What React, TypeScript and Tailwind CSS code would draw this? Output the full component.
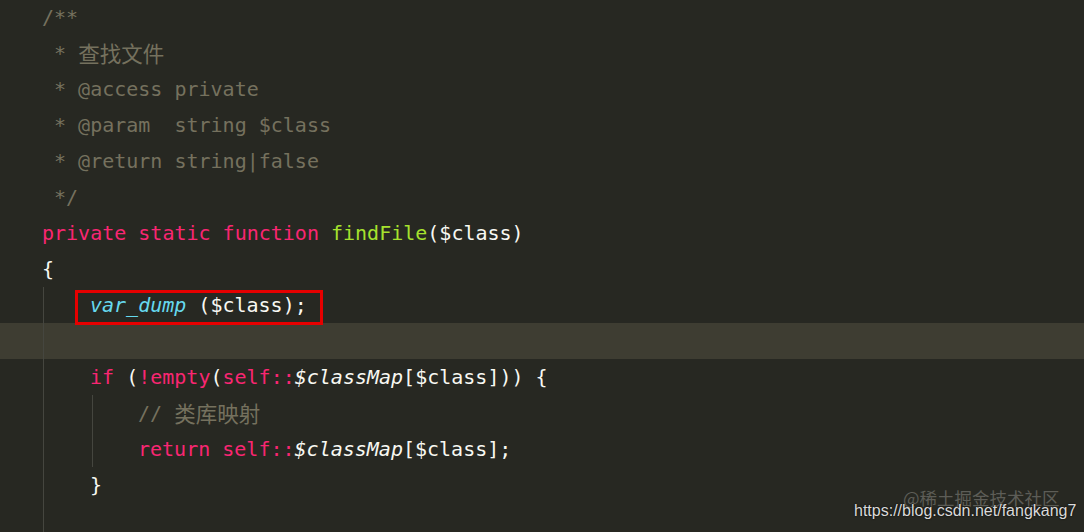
const mono = "font-['DejaVu_Sans_Mono','Liberation_Mono','Noto_Sans_CJK_SC',monospace]";

type Tok = { t: string; c?: string };

const cm = "text-[#75715e]";
const kw = "text-[#f92672]";
const fn = "text-[#a6e22e]";
const pl = "text-[#f8f8f2]";
const bi = "text-[#66d9ef] italic";
const it = "text-[#f8f8f2] italic";

// guides: how many indent guides precede the line text
type Line = { guides: number; toks: Tok[]; active?: boolean };

const lines: Line[] = [
  { guides: 0, toks: [{ t: "/**", c: cm }] },
  { guides: 0, toks: [{ t: " * ", c: cm }, { t: "查找文件", c: "cjk" }] },
  { guides: 0, toks: [{ t: " * @access private", c: cm }] },
  { guides: 0, toks: [{ t: " * @param  string $class", c: cm }] },
  { guides: 0, toks: [{ t: " * @return string|false", c: cm }] },
  { guides: 0, toks: [{ t: " */", c: cm }] },
  {
    guides: 0,
    toks: [
      { t: "private static function ", c: kw },
      { t: "findFile", c: fn },
      { t: "($class)", c: pl },
    ],
  },
  { guides: 0, toks: [{ t: "{", c: pl }] },
  { guides: 1, toks: [{ t: "var_dump", c: bi }, { t: " ($class);", c: pl }] },
  { guides: 1, toks: [], active: true },
  {
    guides: 1,
    toks: [
      { t: "if", c: kw },
      { t: " (", c: pl },
      { t: "!empty", c: kw },
      { t: "(", c: pl },
      { t: "self::", c: kw },
      { t: "$classMap", c: it },
      { t: "[$class])) {", c: pl },
    ],
  },
  { guides: 2, toks: [{ t: "// ", c: cm }, { t: "类库映射", c: "cjk" }] },
  {
    guides: 2,
    toks: [
      { t: "return self::", c: kw },
      { t: "$classMap", c: it },
      { t: "[$class];", c: pl },
    ],
  },
  { guides: 1, toks: [{ t: "}", c: pl }] },
  { guides: 1, toks: [] },
];

function CodeLine({ line }: { line: Line }) {
  return (
    <div
      className={`flex h-[36px] items-center whitespace-pre pl-[42px] ${
        line.active ? "bg-[#3e3d32]" : ""
      }`}
    >
      {line.guides >= 1 && (
        <span className="ml-[1px] w-[47px] shrink-0 self-stretch border-l border-[#45463f]" />
      )}
      {line.guides >= 2 && (
        <span className="ml-[2px] w-[46px] shrink-0 self-stretch border-l border-[#45463f]" />
      )}
      {line.toks.map((tk, i) =>
        tk.c === "cjk" ? (
          <span
            key={i}
            className="text-[#75715e] text-[21.5px] font-['Noto_Sans_CJK_SC',sans-serif]"
          >
            {tk.t}
          </span>
        ) : (
          <span key={i} className={tk.c}>
            {tk.t}
          </span>
        )
      )}
    </div>
  );
}

export default function App() {
  return (
    <div className={`relative h-[532px] w-[1084px] overflow-hidden bg-[#272822] text-[20px] ${mono}`}>
      <div className="-mt-[1px]">
        {lines.map((l, i) => (
          <CodeLine key={i} line={l} />
        ))}
      </div>

      {/* annotation box around var_dump */}
      <div className="absolute left-[75px] top-[290px] h-[35px] w-[248px] border-[3px] border-[#e60000]" />

      {/* watermarks */}
      <div className="absolute left-[903px] top-[489px] text-[17.5px] leading-none text-[#5d5d57] font-['Noto_Sans_CJK_SC',sans-serif]">
        @稀土掘金技术社区
      </div>
      <div className="absolute left-[854px] top-[503px] text-[16px] leading-none text-[#dadada] font-['Liberation_Sans',sans-serif] [text-shadow:0_0_2px_#000]">
        https://blog.csdn.net/fangkang7
      </div>
    </div>
  );
}
